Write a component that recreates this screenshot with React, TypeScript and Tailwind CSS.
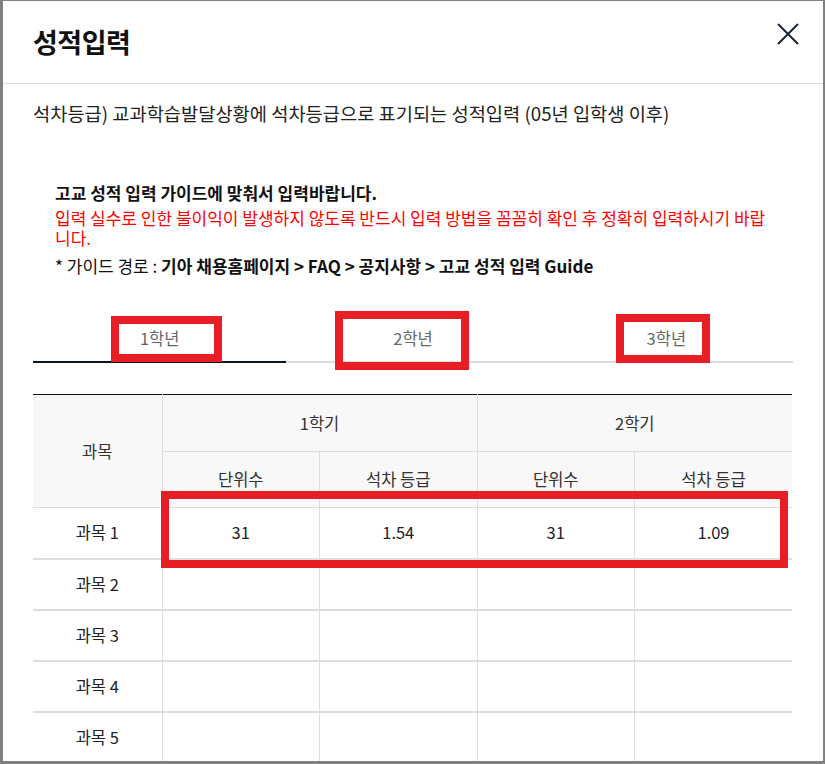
const font = { fontFamily: '"Noto Sans CJK KR", "Noto Sans", sans-serif' };

const rows = [
  { name: "과목 1", values: ["31", "1.54", "31", "1.09"] },
  { name: "과목 2", values: ["", "", "", ""] },
  { name: "과목 3", values: ["", "", "", ""] },
  { name: "과목 4", values: ["", "", "", ""] },
  { name: "과목 5", values: ["", "", "", ""] },
];

const tabs = ["1학년", "2학년", "3학년"];

function GuideBox() {
  return (
    <div className="mt-[57px] pl-[22px] pr-[19px]">
      <p className="text-[17px] leading-[22px] font-bold text-[#111]">
        고교 성적 입력 가이드에 맞춰서 입력바랍니다.
      </p>
      <p className="mt-[4px] text-[17px] leading-[20px] text-[#ff0000] break-all">
        입력 실수로 인한 불이익이 발생하지 않도록 반드시 입력 방법을 꼼꼼히 확인 후 정확히 입력하시기 바랍니다.
      </p>
      <p className="mt-[7px] text-[17px] leading-[22px] text-[#111]">
        * 가이드 경로 :{" "}
        <span className="font-bold">
          기아 채용홈페이지 &gt; FAQ &gt; 공지사항 &gt; 고교 성적 입력 Guide
        </span>
      </p>
    </div>
  );
}

function Tabs() {
  return (
    <div className="mt-[39px] grid grid-cols-3">
      {tabs.map((t, i) => (
        <div
          key={t}
          className={
            i === 0
              ? "h-[47px] flex items-center justify-center border-b-2 border-[#0b1623] text-[16.5px] text-[#666]"
              : "h-[47px] flex items-center justify-center border-b-2 border-[#dddddd] text-[16.5px] text-[#666]"
          }
        >
          {t}
        </div>
      ))}
    </div>
  );
}

function ScoreTable() {
  return (
    <table className="mt-[31px] w-[759px] table-fixed border-collapse text-[16.5px] text-[#222]">
      <colgroup>
        <col className="w-[129px]" />
        <col />
        <col />
        <col />
        <col />
      </colgroup>
      <thead className="bg-[#f8f8f8] text-[#333]">
        <tr className="h-[57px] border-t border-[#111]">
          <th rowSpan={2} className="font-normal border-r border-b border-[#dddddd]">
            과목
          </th>
          <th colSpan={2} className="font-normal border-r border-b border-[#dddddd]">
            1학기
          </th>
          <th colSpan={2} className="font-normal border-b border-[#dddddd]">
            2학기
          </th>
        </tr>
        <tr className="h-[56px]">
          <th className="font-normal border-r border-b border-[#dddddd]">단위수</th>
          <th className="font-normal border-r border-b border-[#dddddd]">석차 등급</th>
          <th className="font-normal border-r border-b border-[#dddddd]">단위수</th>
          <th className="font-normal border-b border-[#dddddd]">석차 등급</th>
        </tr>
      </thead>
      <tbody>
        {rows.map((r) => (
          <tr key={r.name} className="h-[51px] border-b-2 border-[#dddddd]">
            <td className="text-center border-r border-[#dddddd]">{r.name}</td>
            {r.values.map((v, i) => (
              <td
                key={i}
                className={
                  i < 3 ? "text-center border-r border-[#dddddd]" : "text-center"
                }
              >
                {v}
              </td>
            ))}
          </tr>
        ))}
      </tbody>
    </table>
  );
}

export default function App() {
  return (
    <div className="relative h-[764px] w-[825px] overflow-hidden bg-[#808080]" style={font}>
      <div className="ml-[3px] mt-[1px] h-[760px] w-[820px] overflow-hidden bg-white">
        {/* Header */}
        <div className="h-[83px] flex items-center justify-between pl-[30px] pr-[24px] border-b border-[#dddddd]">
          <h2 className="text-[27px] font-bold text-[#111] tracking-[-0.5px]">성적입력</h2>
          <svg
            width="22"
            height="22"
            viewBox="0 0 22 22"
            className="self-start mt-[22px] text-[#1b2433]"
            fill="none"
            stroke="currentColor"
            strokeWidth="2"
          >
            <path d="M1 1 L21 21 M21 1 L1 21" />
          </svg>
        </div>

        {/* Body */}
        <div className="px-[30px] pt-[17px]">
          <p className="text-[18.7px] leading-[24px] text-[#222]">
            석차등급) 교과학습발달상황에 석차등급으로 표기되는 성적입력 (05년 입학생 이후)
          </p>
          <GuideBox />
          <Tabs />
          <ScoreTable />
        </div>
      </div>

      {/* annotation boxes */}
      <div className="absolute left-[111px] top-[316px] w-[111px] h-[46px] border-8 border-[#e81e25]" />
      <div className="absolute left-[335px] top-[311px] w-[134px] h-[59px] border-8 border-[#e81e25]" />
      <div className="absolute left-[616px] top-[314px] w-[94px] h-[49px] border-8 border-[#e81e25]" />
      <div className="absolute left-[161px] top-[491px] w-[627px] h-[77px] border-8 border-[#e81e25]" />
    </div>
  );
}
